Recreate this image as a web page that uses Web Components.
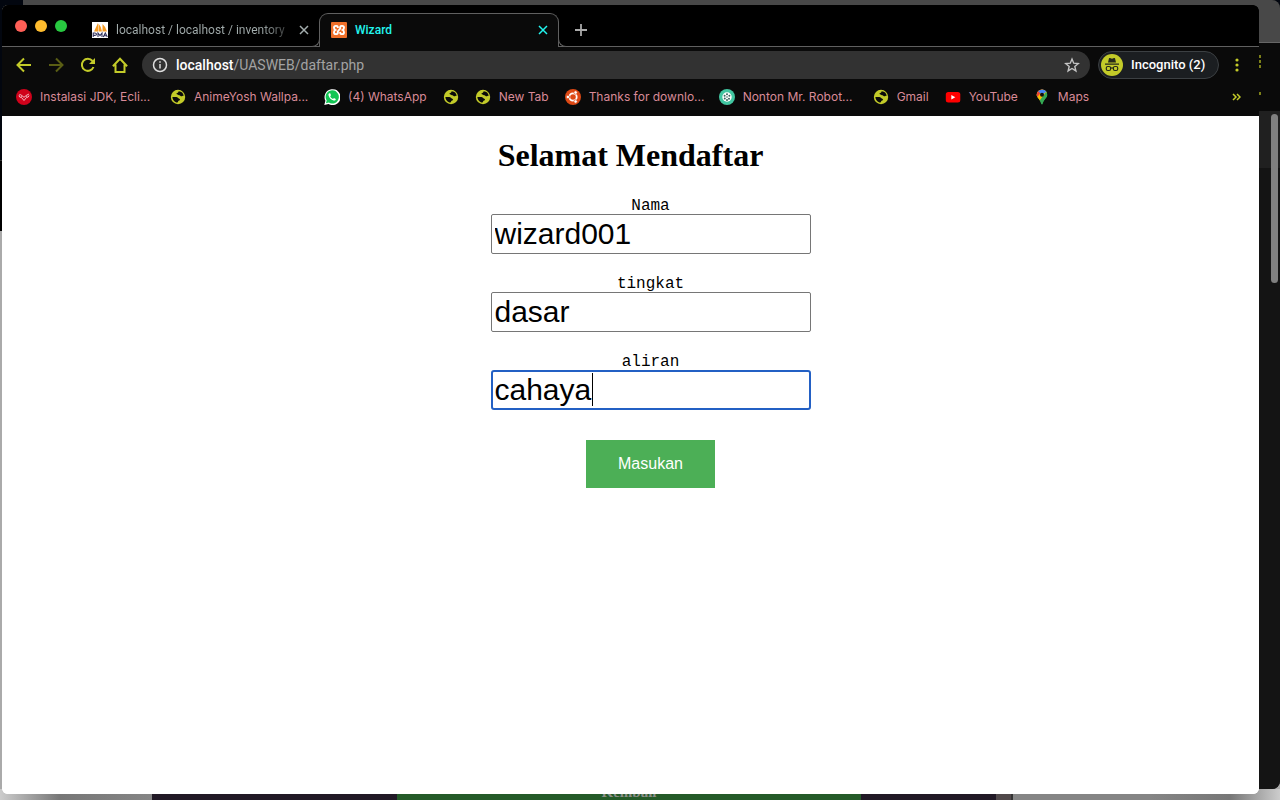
<!DOCTYPE html>
<html lang="id">
<head>
<meta charset="utf-8">
<meta name="viewport" content="width=device-width, initial-scale=1">
<title>Wizard</title>
<style>
  html, body { margin: 0; min-height: 100%; }
  body { font-family: Inter, "Noto Sans", sans-serif; background: #02060f; }
</style>
</head>
<body>
<desktop-scene>
  <desktop-backdrop slot="backdrop" aria-hidden="true"></desktop-backdrop>
  <browser-window>
    <tab-strip slot="chrome">
      <browser-tab label="localhost / localhost / inventory"><site-icon slot="icon" name="pma"></site-icon></browser-tab>
      <browser-tab label="Wizard" active><site-icon slot="icon" name="xampp"></site-icon></browser-tab>
    </tab-strip>
    <address-toolbar slot="chrome" host="localhost" path="/UASWEB/daftar.php"></address-toolbar>
    <bookmarks-bar slot="chrome">
      <bookmark-link label="Instalasi JDK, Ecli..." icon="duck" long></bookmark-link>
      <bookmark-link label="AnimeYosh Wallpa..." icon="globe" long></bookmark-link>
      <bookmark-link label="(4) WhatsApp" icon="whatsapp"></bookmark-link>
      <bookmark-link label="" icon="globe"></bookmark-link>
      <bookmark-link label="New Tab" icon="globe"></bookmark-link>
      <bookmark-link label="Thanks for downlo..." icon="ubuntu" long></bookmark-link>
      <bookmark-link label="Nonton Mr. Robot..." icon="reel" long></bookmark-link>
      <bookmark-link label="Gmail" icon="globe"></bookmark-link>
      <bookmark-link label="YouTube" icon="youtube"></bookmark-link>
      <bookmark-link label="Maps" icon="maps"></bookmark-link>
    </bookmarks-bar>
    <register-page>
      <form-field label="Nama" value="wizard001"></form-field>
      <form-field label="tingkat" value="dasar"></form-field>
      <form-field label="aliran" value="cahaya" active></form-field>
    </register-page>
  </browser-window>
</desktop-scene>

<script>
const define = (name, render) => customElements.define(name, class extends HTMLElement {
  connectedCallback() {
    if (this.shadowRoot) return;
    const root = this.attachShadow({ mode: "open" });
    const t = document.createElement("template");
    t.innerHTML = render(this);
    root.append(t.content.cloneNode(true));
  }
});

const icons = {
  pma: `<rect width="16" height="16" fill="#fff"/><path d="M2 9.500L6 1v8.500zM6.500 9.500V1.500q3 3.500 3.500 8zM10.500 9.500V2q3.500 3 4.500 7.500z" fill="#f59b23"/><path d="M1.200 15v-4h1.600q1.700 0 1.700 1.200t-1.700 1.200H1.200M6 15v-4l2 2.500 2-2.500v4M11.300 15l2-4 2 4M12 13.700h2.500" fill="none" stroke="#34345e" stroke-width="1.100"/>`,
  xampp: `<rect width="16" height="16" rx="1" fill="#f0702a"/><path d="M6.800 6V5c0-1.600-3.800-1.600-3.800.6q0 1.700 1.300 2.400Q3 8.700 3 10.400c0 2.200 3.800 2.200 3.800.6V9.500L9.200 6.500V5c0-1.600 3.800-1.600 3.800.6q0 1.700-1.300 2.400 1.300.7 1.300 2.400c0 2.200-3.800 2.200-3.800.6v-1" fill="none" stroke="#fff" stroke-width="1.900"/>`,
  duck: `<circle cx="8" cy="8" r="8" fill="#d0021b"/><path d="M3 6.300q1-1.500 2.500 0l2.500 2 2.500-2q2-1 2.500-1.300M3 6.500q0 2 2.500 2M13 6.500q-.3 2-2.500 2L8 11.500 5.500 8.500M5 7.200h1M10 7.200h1" fill="none" stroke="#f5bdc4" stroke-width="1"/>`,
  globe: `<circle cx="8" cy="8" r="7.200" fill="#c3cb29"/><path d="M8.700 2.300c3 .1 4.500 1.900 5 4.400-1-.3-1.500.9-2.700.6-.7-.2-.7-1.300-1.700-1.100C8.200 6.400 8 5.600 7 5.300 6.200 5 6.300 4 7.200 3.900c1-.1 1.300-.7 1.500-1.600zM2.400 8h3.900c1.500 0 1.700 1.500 2.900 1.700 1.100.2 1 1.500 0 1.700-1.200.2-.8 1.200-1.800 2.200C4.800 13.300 2.500 11 2.400 8z" fill="#0a0a0a"/>`,
  whatsapp: `<path d="M.3 16l1.100-4.200A8 8 0 1 1 4.400 15z" fill="#fff"/><path d="M1.900 14.300l.8-2.800a6.600 6.600 0 1 1 2.200 2.100z" fill="#12c654"/><path d="M5.500 4.200c-.8.200-1.300 1-.9 2.200.7 2.500 2.500 4.300 5 5 1.200.3 2.100-.3 2.200-1.500L9.900 9l-.8 1C7.700 9.500 6.800 8.600 6.200 7.200l.8-.9-.8-2z" fill="#fff"/>`,
  ubuntu: `<circle cx="8" cy="8" r="8" fill="#dd4814"/><circle cx="8" cy="8" r="3.700" fill="none" stroke="#fff" stroke-width="1.800"/><g fill="#fff" stroke="#dd4814" stroke-width=".7"><circle cx="2.900" cy="8" r="1.700"/><circle cx="10.600" cy="3.500" r="1.700"/><circle cx="10.600" cy="12.500" r="1.700"/></g>`,
  reel: `<circle cx="8" cy="8" r="8" fill="#41c6a1"/><circle cx="8" cy="8" r="4.700" fill="#fff"/><g fill="#3b6660"><circle cx="8" cy="5.300" r="1"/><circle cx="10.400" cy="6.800" r="1"/><circle cx="10" cy="9.800" r="1"/><circle cx="8" cy="10.900" r="1"/><circle cx="5.800" cy="9.600" r="1"/><circle cx="5.600" cy="6.700" r="1"/><circle cx="8" cy="8" r=".8"/></g>`,
  youtube: `<rect x=".8" y="3" width="14.500" height="10.400" rx="2.500" fill="#f00"/><path d="M6.300 6v4.500L10.300 8.200z" fill="#fff"/>`,
  maps: `<defs><clipPath id="p"><path d="M8 .5a5.300 5.300 0 0 1 5.300 5.300c0 3.200-3.600 4.700-4.500 9q-.8 1.600-1.600 0c-.9-4.300-4.500-5.800-4.500-9A5.300 5.300 0 0 1 8 .5z"/></clipPath></defs><g clip-path="url(#p)"><path d="M0 0h16v16H0z" fill="#34a853"/><path d="M0 0h16L6 12 0 9z" fill="#fbbc04"/><path d="M0 0h10L3.500 7.800 0 9z" fill="#ea4335"/><path d="M4 2l5-2h7L8 6z" fill="#4285f4"/><path d="M13 2v6L6.500 16 6 11z" fill="#34a853"/></g><circle cx="8" cy="5.800" r="2" fill="#101010"/>`
};

define("site-icon", el => `
  <style>:host{display:block;flex:none;width:16px;height:16px} svg{display:block}</style>
  <svg width="16" height="16" viewBox="0 0 16 16" aria-hidden="true">${icons[el.getAttribute("name")]}</svg>`);

define("desktop-scene", () => `
  <style>
    :host{display:flex;position:relative;box-sizing:border-box;min-height:100vh;padding:5px 21px 6px 2px;overflow:hidden}
    ::slotted(browser-window){flex:1;min-width:0;z-index:1}
  </style>
  <slot name="backdrop"></slot><slot></slot>`);

/* The windows that lie behind the front one; only their edges show. */
define("desktop-backdrop", () => `
  <style>
    :host{display:flex;flex-direction:column;position:absolute;inset:0;
      background:linear-gradient(#02060f 0 160px,#333 160px 161px,#000 161px 231px,#aaa 231px)}
    .back{flex:1;margin-left:23px;display:flex;flex-direction:column;background:#141414;border-radius:0 8px 8px 0;overflow:hidden}
    .title{height:42px;background:#484848;border-bottom:1px solid #666}
    .bar{height:68px;background:#0a0a0a;position:relative}
    .bar i{position:absolute;right:19px;width:2px;height:3px;background:#7c8018}
    .view{flex:1;display:flex;justify-content:flex-end;padding:3px 2px;background:linear-gradient(#202020 57px,#141414 57px)}
    .thumb{width:7px;height:169px;border-radius:4px;background:#808080}
    .page{display:flex;height:11px;background:linear-gradient(90deg,#ccc,#777 60px,#858585 152px,#858585 1150px,#777 1230px,#ccc)}
    .gap{flex:0 0 152px}
    .art{background:#211926;flex:0 0 245px}
    .green{background:#245a28;flex:0 0 464px;display:flex;align-items:flex-end;justify-content:center;color:#8a8f88;font:bold 15px/16px "Liberation Serif",serif}
    .right{flex:0 0 135px}.brown{background:#50484a;flex:0 0 15px;border-right:2px solid #333}
  </style>
  <div class="back">
    <div class="title"></div>
    <div class="bar"><i style="top:12px"></i><i style="top:17px"></i><i style="top:22px"></i><i style="top:49px"></i></div>
    <div class="view"><div class="thumb"></div></div>
  </div>
  <div class="page"><div class="gap"></div><div class="art"></div><div class="green">Kembali</div><div class="art right"></div><div class="brown"></div></div>`);

define("browser-window", () => `
  <style>
    :host{display:flex;flex-direction:column;background:#fff;border-radius:6px;overflow:hidden}
    .chrome{background:#0a0a0a}
  </style>
  <header class="chrome"><slot name="chrome"></slot></header><slot></slot>`);

define("tab-strip", () => `
  <style>
    :host{display:flex;box-sizing:border-box;height:42px;background:#000;border-bottom:1px solid #606060}
    .lights{display:flex;gap:8px;padding:15px 13px 0;width:52px}
    .lights button{width:12px;height:12px;padding:0;border:0;border-radius:50%}
    .tabs{display:flex;height:42px;padding-top:8px;box-sizing:border-box}
    .new{width:28px;height:28px;margin:11px 0 0 8px;padding:0;border:0;background:none;display:grid;place-items:center}
  </style>
  <div class="lights">
    <button aria-label="Close window" style="background:#ff5f57"></button>
    <button aria-label="Minimize window" style="background:#febc2e"></button>
    <button aria-label="Zoom window" style="background:#28c840"></button>
  </div>
  <div class="tabs" role="tablist"><slot></slot></div>
  <button class="new" aria-label="New tab"><svg width="14" height="14"><path d="M7 1v12M1 7h12" stroke="#aaa" stroke-width="1.800"/></svg></button>`);

define("browser-tab", el => `
  <style>
    :host{display:flex;position:relative;box-sizing:border-box;width:239px;height:34px;padding:0 7px 0 12px;gap:8px;align-items:center;font:12px/16px Roboto,sans-serif;color:#a3adad}
    :host([active]){width:240px;border:1px solid #606060;border-bottom:0;border-radius:9px 9px 0 0;background:#0a0a0a;color:#22f5ee;padding:0 7px 1px 11px;font-weight:500}
    .foot{display:none}
    :host([active]) .foot{display:block;position:absolute;bottom:0;width:8px;height:8px;border-bottom:1px solid #606060;background:#000}
    .foot.l{right:100%;border-right:1px solid #606060;border-bottom-right-radius:8px}
    .foot.r{left:100%;border-left:1px solid #606060;border-bottom-left-radius:8px}
    .foot::before{content:"";position:absolute;z-index:-1;bottom:-1px;width:8px;height:8px;background:#0a0a0a}
    .foot.l::before{right:-1px}
    .foot.r::before{left:-1px}
    .label{flex:1;min-width:0;white-space:nowrap}
    :host(:not([active])) .label{color:transparent;background:linear-gradient(90deg,#a3adad 145px,#222 176px);-webkit-background-clip:text;background-clip:text}
    button{width:16px;height:16px;padding:0;border:0;background:none;color:inherit;display:grid;place-items:center}
  </style>
  <slot name="icon"></slot>
  <span class="label" role="tab">${el.getAttribute("label")}</span>
  <button aria-label="Close tab"><svg width="10" height="10"><path d="M1 1l8 8M9 1l-8 8" stroke="currentColor" stroke-width="1.500"/></svg></button>
  <span class="foot l"></span><span class="foot r"></span>`);

define("address-toolbar", el => `
  <style>
    :host{display:flex;align-items:center;height:36px;padding:0 12px 0 6px;color:#c3cb29}
    button{padding:0;border:0;background:none;color:inherit;display:grid;place-items:center;font:inherit}
    .nav{width:32px;height:28px}
    .dim{color:#5a5e14}
    .box{flex:1;display:flex;align-items:center;gap:8px;height:28px;box-sizing:border-box;margin:0 8px 0 6px;padding:0 10px;border-radius:14px;background:#323232;color:#ddd}
    .url{flex:1;font:14px/20px Roboto,sans-serif;color:#a3a3a3;outline:0;white-space:nowrap}
    .url b{font-weight:500;color:#fff}
    .profile{display:flex;align-items:center;gap:8px;box-sizing:border-box;height:28px;width:121px;padding:0 2px;border:1px solid #3c4043;border-radius:14px;background:#1b1e21;color:#fff;font:500 13px/16px Roboto,sans-serif;white-space:nowrap}
    .menu{width:20px;height:28px;margin-left:8px}
  </style>
  <button class="nav" aria-label="Back"><svg width="16" height="16" fill="none" stroke="currentColor" stroke-width="2"><path d="M15 8H2M8 1.500L1.500 8 8 14.500"/></svg></button>
  <button class="nav dim" aria-label="Forward"><svg width="16" height="16" fill="none" stroke="currentColor" stroke-width="2"><path d="M1 8h13M8 1.500L14.500 8 8 14.500"/></svg></button>
  <button class="nav" aria-label="Reload"><svg width="16" height="16" fill="none" stroke="currentColor" stroke-width="2"><path d="M13.500 10A6 6 0 1 1 12.500 4"/><path d="M15 1v6H9z" fill="currentColor" stroke="none"/></svg></button>
  <button class="nav" aria-label="Home"><svg width="16" height="16" fill="none" stroke="currentColor" stroke-width="2"><path d="M.9 9.200L8 1.700l7.100 7.500M3.500 7.500v7.500h9V7.500"/></svg></button>
  <div class="box">
    <svg width="16" height="16" fill="none" stroke="currentColor" stroke-width="1.500"><circle cx="8" cy="8" r="6.500"/><path d="M8 7v4.500M8 4.200v1.600"/></svg>
    <div class="url" role="textbox" contenteditable="true" spellcheck="false" aria-label="Address"><b>${el.getAttribute("host")}</b>${el.getAttribute("path")}</div>
    <button aria-label="Bookmark this page"><svg width="16" height="16" fill="none" stroke="#c4c4c4" stroke-width="1.400"><path d="M8 2l1.700 4.200 4.600.3-3.500 2.900 1.100 4.500L8 11.500l-3.900 2.400 1.100-4.500-3.500-2.900 4.600-.3z"/></svg></button>
  </div>
  <button class="profile">
    <svg width="22" height="22"><circle cx="11" cy="11" r="11" fill="#c3cb29"/><path d="M7 8.500L8 4.300q.3-.5 1-.2L11 4.700l2-.6q.7-.3 1 .2l1 4.200zM4 9.500h14v1.300H4z" fill="#25291a"/><g fill="none" stroke="#25291a" stroke-width="1.200"><rect x="5.300" y="12.500" width="4.300" height="4" rx="1.500"/><rect x="12.400" y="12.500" width="4.300" height="4" rx="1.500"/><path d="M9.600 14.200q1.400-.8 2.800 0"/></g></svg>
    <span>Incognito (2)</span>
  </button>
  <button class="menu" aria-label="Menu"><svg width="4" height="14" fill="currentColor"><circle cx="2" cy="2" r="1.600"/><circle cx="2" cy="7" r="1.600"/><circle cx="2" cy="12" r="1.600"/></svg></button>`);

define("bookmarks-bar", () => `
  <style>
    :host{display:flex;align-items:center;gap:16px;box-sizing:border-box;height:33px;padding:0 18px 5px 14px}
    button{margin-left:auto;padding:0;border:0;background:none;display:grid}
  </style>
  <slot></slot>
  <button aria-label="More bookmarks"><svg width="9" height="8"><path d="M1 1l3 3-3 3M5 1l3 3-3 3" fill="none" stroke="#c3cb29" stroke-width="1.500"/></svg></button>`);

define("bookmark-link", el => `
  <style>
    :host{display:block;flex:none}
    a{display:flex;align-items:center;gap:8px;color:#d98a98;font-size:12px;line-height:16px;text-decoration:none;white-space:nowrap}
    :host([long]) span{width:114px}
  </style>
  <a href="#" aria-label="${el.getAttribute("label") || "Bookmark"}"><site-icon name="${el.getAttribute("icon")}"></site-icon>${el.getAttribute("label") ? `<span>${el.getAttribute("label")}</span>` : ""}</a>`);

define("register-page", () => `
  <style>
    :host{display:block;flex:1;padding-top:21px;background:#fff;color:#000}
    h1{margin:0;text-align:center;font:bold 32px/37px "Liberation Serif",serif}
    form{display:flex;flex-direction:column;align-items:center;gap:20px;margin:22px 0 0;padding-left:40px}
    button{margin-top:10px;height:48px;padding:0 32px;border:0;background:#4caf56;color:#fff;font:16px/18px "Liberation Sans",sans-serif}
  </style>
  <h1>Selamat Mendaftar</h1>
  <form><slot></slot><button type="button">Masukan</button></form>`);

define("form-field", el => `
  <style>
    :host{display:flex;flex-direction:column;align-items:center}
    label{padding-top:2px;font:16px/16px "Liberation Mono",monospace}
    .control{display:flex;position:relative}
    input{box-sizing:border-box;width:320px;height:40px;padding:1px 3px;border:1px solid #767676;border-radius:2px;outline:0;font:30px/34px "Liberation Sans",sans-serif;color:#000;background:#fff}
    :host([active]) input{border:2px solid #2360c4;padding:0 2px;border-radius:3px;caret-color:transparent}
    .caret{position:absolute;left:101px;top:3px;width:1px;height:33px;background:#000}
  </style>
  <label for="field">${el.getAttribute("label")}</label>
  <div class="control">
    <input id="field" type="text" value="${el.getAttribute("value")}">
    ${el.hasAttribute("active") ? `<span class="caret"></span>` : ""}
  </div>`);
</script>
</body>
</html>
